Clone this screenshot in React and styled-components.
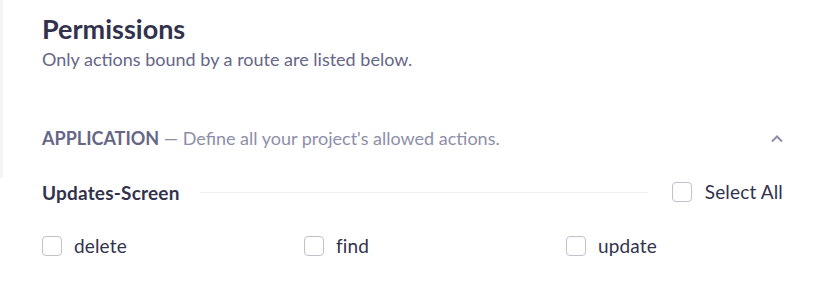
import styled, { createGlobalStyle } from 'styled-components';

const GlobalStyle = createGlobalStyle`
  html, body {
    margin: 0;
    padding: 0;
    background: #ffffff;
  }
  body {
    font-family: Lato, "Open Sans", sans-serif;
    color: #32324d;
  }
`;

const Page = styled.div`
  width: 823px;
  height: 297px;
  overflow: hidden;
`;

const Header = styled.div`
  height: 178px;
  box-sizing: border-box;
  border-left: 3px solid #f4f4f7;
  padding: 12px 40px 0 39px;
`;

const Title = styled.h2`
  margin: 0;
  font-size: 27px;
  line-height: 34px;
  font-weight: 700;
  color: #32324d;
`;

const Subtitle = styled.p`
  margin: 0;
  font-size: 18px;
  line-height: 26px;
  color: #666687;
`;

const AccordionHead = styled.div`
  display: flex;
  align-items: center;
  justify-content: space-between;
  margin-top: 53px;
`;

const AccordionLabel = styled.div`
  font-size: 18px;
  line-height: 26px;
  color: #8e8ea9;

  strong {
    font-weight: 700;
    color: #666687;
  }
`;

const Chevron = styled.svg`
  width: 12px;
  height: 12px;
  display: block;
  margin-top: 2px;
`;

const Body = styled.div`
  padding: 0 40px 0 42px;
`;

const ModuleRow = styled.div`
  display: flex;
  align-items: center;
  height: 28px;
`;

const ModuleName = styled.span`
  font-size: 19px;
  letter-spacing: 0.2px;
  font-weight: 700;
  color: #32324d;
  white-space: nowrap;
`;

const Divider = styled.div`
  flex: 1;
  height: 1px;
  background: #eeeef3;
  margin: 0 24px 0 20px;
`;

const CheckLabel = styled.label`
  display: flex;
  align-items: center;
  gap: ${p => (p.$wide ? 13 : 12)}px;
  font-size: 19px;
  line-height: 24px;
  letter-spacing: 0.15px;
  color: #32324d;
  white-space: nowrap;
  cursor: pointer;
`;

const Box = styled.span`
  width: 20px;
  height: 20px;
  box-sizing: border-box;
  border: 1px solid #c0c0cf;
  border-radius: 4px;
  background: #ffffff;
  flex-shrink: 0;
`;

const Actions = styled.div`
  display: grid;
  grid-template-columns: repeat(3, 262px);
  margin-top: 28px;
`;

function Checkbox({ children, wide }) {
  return (
    <CheckLabel $wide={wide}>
      <Box />
      <span>{children}</span>
    </CheckLabel>
  );
}

export default function App() {
  const actions = ['delete', 'find', 'update'];
  return (
    <Page>
      <GlobalStyle />
      <Header>
        <Title>Permissions</Title>
        <Subtitle>Only actions bound by a route are listed below.</Subtitle>
        <AccordionHead>
          <AccordionLabel>
            <strong>APPLICATION</strong> — Define all your project's allowed actions.
          </AccordionLabel>
          <Chevron viewBox="0 0 12 12" fill="none">
            <path d="M1 8.5 L6 3.5 L11 8.5" stroke="#8e8ea9" strokeWidth="2" />
          </Chevron>
        </AccordionHead>
      </Header>
      <Body>
        <ModuleRow>
          <ModuleName>Updates-Screen</ModuleName>
          <Divider />
          <Checkbox wide>Select All</Checkbox>
        </ModuleRow>
        <Actions>
          {actions.map(a => (
            <Checkbox key={a}>{a}</Checkbox>
          ))}
        </Actions>
      </Body>
    </Page>
  );
}
